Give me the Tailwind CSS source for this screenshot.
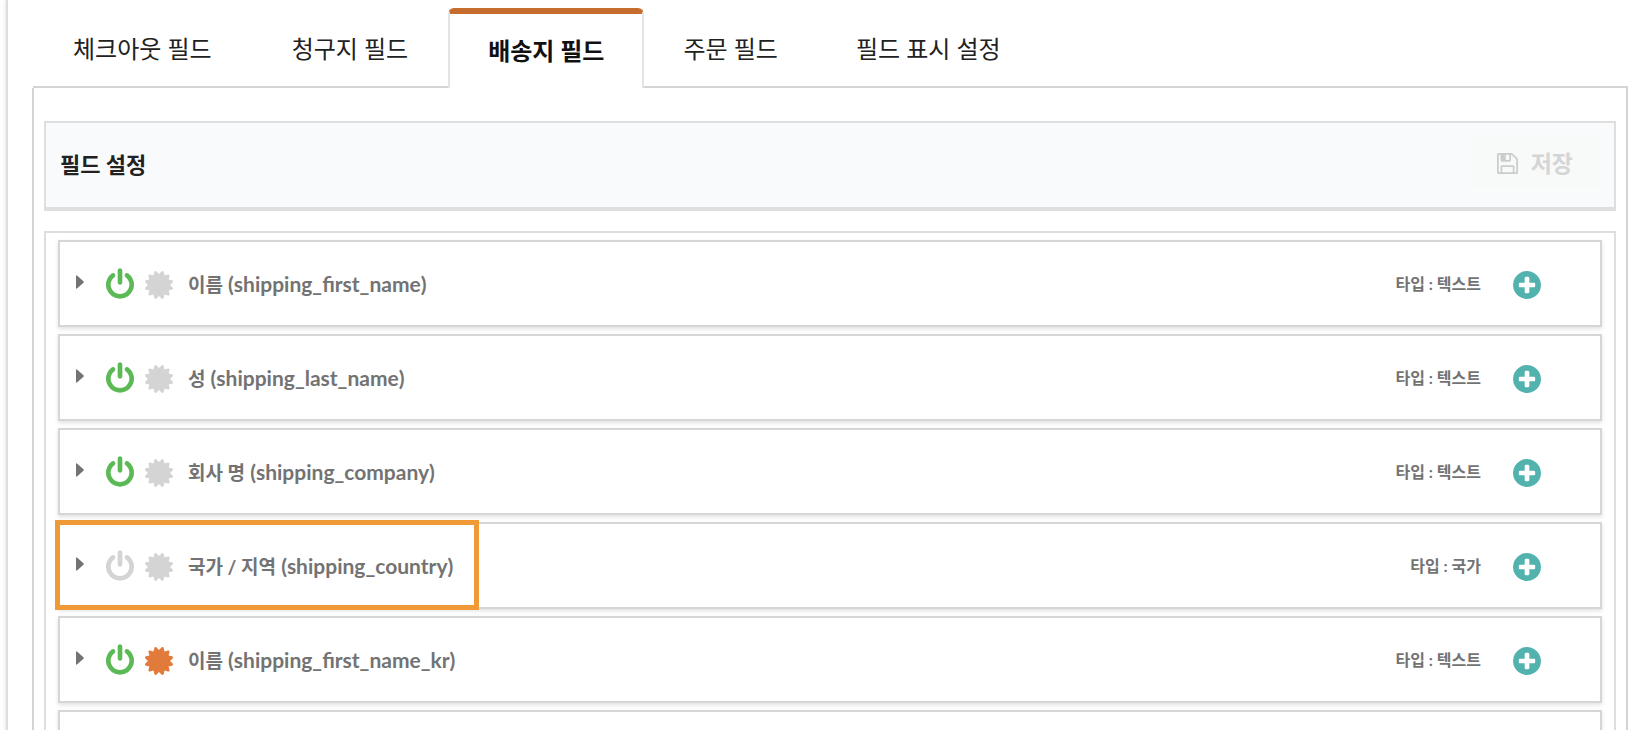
<!DOCTYPE html>
<html lang="ko">
<head>
    <meta charset="UTF-8">
    <meta name="viewport" content="width=device-width, initial-scale=1.0">
    <script src="https://cdn.jsdelivr.net/npm/@tailwindcss/browser@4"></script>
    <title>배송지 필드</title>
</head>
<body class="h-screen overflow-hidden bg-white pl-[6px] font-[Lato,'Noto_Sans_CJK_KR',sans-serif] text-[#212121]">

<!-- ICONS -->
<svg class="hidden">
    <symbol id="power" viewBox="128 0 1536 1664">
        <path d="M1664 896q0 156-61 298t-164 245-245 164-298 61-298-61-245-164-164-245-61-298q0-182 80.5-343t226.5-270q43-32 95.5-25t83.5 50q32 42 24.5 94.5t-49.5 84.5q-98 74-151.5 181t-53.5 228q0 104 40.5 198.5t109.5 163.5 163.5 109.5 198.5 40.5 198.5-40.5 163.5-109.5 109.5-163.5 40.5-198.5q0-121-53.5-228t-151.5-181q-42-32-49.5-84.5t24.5-94.5q31-43 84-50t95 25q146 109 226.5 270t80.5 343zm-640-768v640q0 52-38 90t-90 38-90-38-38-90v-640q0-52 38-90t90-38 90 38 38 90z"/>
    </symbol>
    <symbol id="certificate" viewBox="128 128 1536 1536">
        <path d="M1504 896l138 135q30 28 20 70-12 41-52 51l-188 48 53 186q12 41-19 70-29 31-70 19l-186-53-48 188q-10 40-51 52-12 2-19 2-31 0-51-22l-135-138-135 138q-28 30-70 20-41-11-51-52l-48-188-186 53q-41 12-70-19-31-29-19-70l53-186-188-48q-40-10-52-51-10-42 20-70l138-135-138-135q-30-28-20-70 12-41 52-51l188-48-53-186q-12-41 19-70 29-31 70-19l186 53 48-188q10-41 51-51 41-12 70 19l135 139 135-139q29-30 70-19 41 10 51 51l48 188 186-53q41-12 70 19 31 29 19 70l-53 186 188 48q40 10 52 51 10 42-20 70z"/>
    </symbol>
    <symbol id="plus" viewBox="128 128 1536 1536">
        <path d="M1344 960v-128q0-26-19-45t-45-19h-256v-256q0-26-19-45t-45-19h-128q-26 0-45 19t-19 45v256h-256q-26 0-45 19t-19 45v128q0 26 19 45t45 19h256v256q0 26 19 45t45 19h128q26 0 45-19t19-45v-256h256q26 0 45-19t19-45zm320-64q0 209-103 385.5t-279.5 279.5-385.5 103-385.5-103-279.5-279.5-103-385.5 103-385.5 279.5-279.5 385.5-103 385.5 103 279.5 279.5 103 385.5z"/>
    </symbol>
    <symbol id="save" viewBox="128 128 1536 1536">
        <path d="M512 1536h768v-384h-768v384zm896 0h128v-896q0-14-10-38.500t-20-34.500l-281-281q-10-10-34-20t-39-10v416q0 40-28 68t-68 28h-576q-40 0-68-28t-28-68v-416h-128v1280h128v-416q0-40 28-68t68-28h832q40 0 68 28t28 68v416zm-384-928v-320q0-13-9.500-22.500t-22.500-9.500h-192q-13 0-22.500 9.500t-9.500 22.500v320q0 13 9.500 22.500t22.500 9.500h192q13 0 22.500-9.500t9.500-22.500zm640 32v928q0 40-28 68t-68 28h-1344q-40 0-68-28t-28-68v-1344q0-40 28-68t68-28h928q40 0 88 20t76 48l280 280q28 28 48 76t20 88z"/>
    </symbol>
    <symbol id="caret" viewBox="0 0 8 14">
        <path d="M0 1Q0 0 1 .5L7.500 6.300Q8 7 7.500 7.700L1 13.500Q0 14 0 13z"/>
    </symbol>
</svg>

<div class="min-h-screen border-l-2 border-[#dedede] pl-[24px] pr-[14px] shadow-[0_0_4px_rgba(0,0,0,0.15)]">
    <!-- TABS -->
    <nav class="flex h-[88px] items-end pl-px pt-2 text-2xl">
        <button class="h-full px-[40px] pt-[2px] shadow-[inset_0_-2px_0_#d4d4d5]">체크아웃 필드</button>
        <button class="h-full px-[40px] pt-[2px] shadow-[inset_0_-2px_0_#d4d4d5]">청구지 필드</button>
        <button class="h-full rounded-t-md border-x-2 border-t-6 border-x-[#e4e4e4] border-t-[#c66d2e] px-[38px] font-bold text-[#111]">배송지 필드</button>
        <button class="h-full px-[39px] pt-[2px] shadow-[inset_0_-2px_0_#d4d4d5]">주문 필드</button>
        <button class="h-full px-[39px] pt-[2px] shadow-[inset_0_-2px_0_#d4d4d5]">필드 표시 설정</button>
        <div class="h-full grow shadow-[inset_0_-2px_0_#d4d4d5]"></div>
    </nav>

    <main class="border-x-2 border-[#d4d4d5] px-[10px] pt-[33px]">
        <header class="flex h-[90px] items-center justify-between border-2 border-b-4 border-[#dedede] bg-[#f9fafc] px-[14px]">
            <h1 class="mb-[2px] text-[22px] font-bold">필드 설정</h1>
            <button class="mb-[4px] flex h-[50px] items-center gap-[13px] bg-[#f8faf9] pl-[26px] pr-[27px] text-[23px] font-bold text-[#d4d5d6]" disabled>
                <svg class="size-[21px] fill-[#cbcccc]"><use href="#save"/></svg>
                저장
            </button>
        </header>

        <ul id="field-list" class="mt-[20px] flex flex-col gap-[7px] border-2 border-[#dedede] px-[12px] pt-[7px] pb-[12px]"></ul>
    </main>
</div>

<!-- TEMPLATES -->
<template id="field-row">
    <li class="relative flex h-[87px] items-center border-2 border-[#d6d6d6] bg-white pl-[16px] pr-[59px] font-bold text-[#737373] shadow-[0_2px_4px_rgba(0,0,0,0.12)]">
        <button class="mb-1 mr-[22px]" aria-label="펼치기"><svg class="h-[14px] w-[8px] fill-current"><use href="#caret"/></svg></button>
        <button class="power mr-[11px] text-[#d4d4d4]" aria-label="사용"><svg class="h-[31px] w-[28px] fill-current"><use href="#power"/></svg></button>
        <button class="required mr-[15px] mt-[3px] text-[#d4d4d4]" aria-label="필수"><svg class="size-[28px] fill-current"><use href="#certificate"/></svg></button>
        <span class="grow text-[21px]"><span class="name text-[19px]"></span> <span class="key"></span></span>
        <span class="type mr-[32px] text-base"></span>
        <button class="mt-[3px] text-[#52b3ae]" aria-label="추가"><svg class="size-[28px] fill-current"><use href="#plus"/></svg></button>
    </li>
</template>

<template id="highlight">
    <div class="absolute -left-[5px] -top-[4px] h-[90px] w-[424px] border-5 border-[#f09a37]"></div>
</template>

<script>
    const fields = [
        { name: '이름', key: 'shipping_first_name', type: '텍스트', enabled: true },
        { name: '성', key: 'shipping_last_name', type: '텍스트', enabled: true },
        { name: '회사 명', key: 'shipping_company', type: '텍스트', enabled: true },
        { name: '국가 / 지역', key: 'shipping_country', type: '국가', enabled: false, highlight: true },
        { name: '이름', key: 'shipping_first_name_kr', type: '텍스트', enabled: true, required: true },
        { name: '성', key: 'shipping_last_name_kr', type: '텍스트', enabled: true, required: true },
    ];

    const listDom = document.getElementById('field-list');
    const rowTemplate = document.getElementById('field-row');
    for (const field of fields) {
        const row = rowTemplate.content.cloneNode(true).firstElementChild;
        row.querySelector('.name').textContent = field.name;
        row.querySelector('.key').textContent = `(${field.key})`;
        row.querySelector('.type').textContent = '타입 : ' + field.type;
        if (field.enabled)
            row.querySelector('.power').classList.replace('text-[#d4d4d4]', 'text-[#5bb956]');
        if (field.required)
            row.querySelector('.required').classList.replace('text-[#d4d4d4]', 'text-[#e27a3c]');
        if (field.highlight)
            row.append(document.getElementById('highlight').content.cloneNode(true));
        listDom.append(row);
    }
</script>
</body>
</html>
